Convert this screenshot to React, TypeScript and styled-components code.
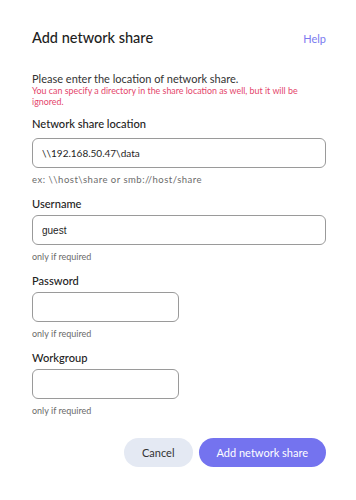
import React from "react";
import styled, { createGlobalStyle } from "styled-components";

const Global = createGlobalStyle`
  html, body { margin: 0; padding: 0; background: #fff; }
  body { font-family: Lato, "Open Sans", sans-serif; color: #222; }
  * { box-sizing: border-box; }
`;

const Dialog = styled.div`
  width: 356px;
  padding: 29px 30px 0 32px;
  display: flex;
  flex-direction: column;
`;

const Header = styled.div`
  display: flex;
  justify-content: space-between;
  align-items: baseline;
  line-height: 18px;
`;

const Title = styled.h1`
  margin: 0;
  font-size: 14.5px;
  line-height: 18px;
  font-weight: 500;
  color: #1e1e1e;
`;

const HelpLink = styled.a`
  font-size: 11px;
  color: #7b7bf0;
  text-decoration: none;
`;

const Intro = styled.p`
  margin: 24px 0 0;
  font-size: 11px;
  line-height: 14px;
  color: #333;
`;

const Warning = styled.p`
  margin: 0;
  font-size: 8.9px;
  line-height: 10.5px;
  color: #e4456b;
`;

const Field = styled.div<{ $first?: boolean }>`
  display: flex;
  flex-direction: column;
  margin-top: ${(p) => (p.$first ? "10px" : "11px")};
`;

const Label = styled.label`
  font-size: 11.1px;
  font-weight: 500;
  line-height: 14px;
  color: #222;
`;

const Input = styled.input<{ $short?: boolean; $alt?: boolean; $gap?: number }>`
  margin-top: ${(p) => p.$gap ?? 4}px;
  width: ${(p) => (p.$short ? "147px" : "294px")};
  height: 30px;
  border: 1px solid #9a9a9a;
  border-radius: 6px;
  padding: 0 9px;
  font-family: ${(p) => (p.$alt ? '"Liberation Sans", Arial, sans-serif' : 'Lato, sans-serif')};
  font-size: 10px;
  color: #1e1e1e;
  caret-color: #111;
  outline: none;
  background: #fff;
`;

const Hint = styled.div<{ $wide?: boolean }>`
  margin-top: 6px;
  font-size: ${(p) => (p.$wide ? "9.5px" : "9px")};
  letter-spacing: ${(p) => (p.$wide ? "0.5px" : "0")};
  line-height: 12px;
  color: #6b6b6b;
`;

const Actions = styled.div`
  display: flex;
  justify-content: flex-end;
  gap: 6px;
  margin-top: 21px;
`;

const Button = styled.button<{ $primary?: boolean }>`
  height: 29px;
  border: none;
  border-radius: 15px;
  padding: 0 18px;
  font-family: Lato, sans-serif;
  font-size: 11px;
  background: ${(p) => (p.$primary ? "#7473ef" : "#e4e9f3")};
  color: ${(p) => (p.$primary ? "#fff" : "#333")};
  cursor: pointer;
`;

export default function App() {
  return (
    <>
      <Global />
      <Dialog>
        <Header>
          <Title>Add network share</Title>
          <HelpLink href="#">Help</HelpLink>
        </Header>
        <Intro>Please enter the location of network share.</Intro>
        <Warning>
          You can specify a directory in the share location as well, but it will be ignored.
        </Warning>
        <Field $first>
          <Label>Network share location</Label>
          <Input $gap={7} defaultValue={"\\\\192.168.50.47\\data"} />
          <Hint $wide>ex: \\host\share or smb://host/share</Hint>
        </Field>
        <Field>
          <Label>Username</Label>
          <Input $alt defaultValue="guest" autoFocus />
          <Hint>only if required</Hint>
        </Field>
        <Field>
          <Label>Password</Label>
          <Input $short type="password" />
          <Hint>only if required</Hint>
        </Field>
        <Field>
          <Label>Workgroup</Label>
          <Input $short />
          <Hint>only if required</Hint>
        </Field>
        <Actions>
          <Button>Cancel</Button>
          <Button $primary>Add network share</Button>
        </Actions>
      </Dialog>
    </>
  );
}
